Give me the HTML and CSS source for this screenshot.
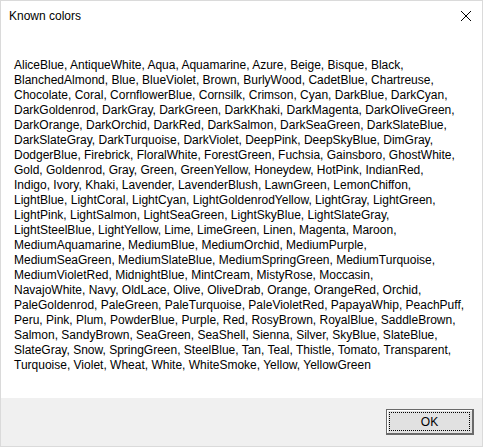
FILE: index.html
```html
<!DOCTYPE html>
<html>
<head>
<meta charset="utf-8">
<link rel="stylesheet" href="styles.css">
</head>
<body>
<div class="window">
  <div class="titlebar">
    <span class="title">Known colors</span>
    <svg class="close" width="12" height="12" viewBox="0 0 12 12"><path d="M1 1 L11 11 M11 1 L1 11" stroke="#000" stroke-width="1" fill="none"/></svg>
  </div>
  <div class="content">
    <div class="line">AliceBlue, AntiqueWhite, Aqua, Aquamarine, Azure, Beige, Bisque, Black,</div>
    <div class="line">BlanchedAlmond, Blue, BlueViolet, Brown, BurlyWood, CadetBlue, Chartreuse,</div>
    <div class="line">Chocolate, Coral, CornflowerBlue, Cornsilk, Crimson, Cyan, DarkBlue, DarkCyan,</div>
    <div class="line">DarkGoldenrod, DarkGray, DarkGreen, DarkKhaki, DarkMagenta, DarkOliveGreen,</div>
    <div class="line">DarkOrange, DarkOrchid, DarkRed, DarkSalmon, DarkSeaGreen, DarkSlateBlue,</div>
    <div class="line">DarkSlateGray, DarkTurquoise, DarkViolet, DeepPink, DeepSkyBlue, DimGray,</div>
    <div class="line">DodgerBlue, Firebrick, FloralWhite, ForestGreen, Fuchsia, Gainsboro, GhostWhite,</div>
    <div class="line">Gold, Goldenrod, Gray, Green, GreenYellow, Honeydew, HotPink, IndianRed,</div>
    <div class="line">Indigo, Ivory, Khaki, Lavender, LavenderBlush, LawnGreen, LemonChiffon,</div>
    <div class="line">LightBlue, LightCoral, LightCyan, LightGoldenrodYellow, LightGray, LightGreen,</div>
    <div class="line">LightPink, LightSalmon, LightSeaGreen, LightSkyBlue, LightSlateGray,</div>
    <div class="line">LightSteelBlue, LightYellow, Lime, LimeGreen, Linen, Magenta, Maroon,</div>
    <div class="line">MediumAquamarine, MediumBlue, MediumOrchid, MediumPurple,</div>
    <div class="line">MediumSeaGreen, MediumSlateBlue, MediumSpringGreen, MediumTurquoise,</div>
    <div class="line">MediumVioletRed, MidnightBlue, MintCream, MistyRose, Moccasin,</div>
    <div class="line">NavajoWhite, Navy, OldLace, Olive, OliveDrab, Orange, OrangeRed, Orchid,</div>
    <div class="line">PaleGoldenrod, PaleGreen, PaleTurquoise, PaleVioletRed, PapayaWhip, PeachPuff,</div>
    <div class="line">Peru, Pink, Plum, PowderBlue, Purple, Red, RosyBrown, RoyalBlue, SaddleBrown,</div>
    <div class="line">Salmon, SandyBrown, SeaGreen, SeaShell, Sienna, Silver, SkyBlue, SlateBlue,</div>
    <div class="line">SlateGray, Snow, SpringGreen, SteelBlue, Tan, Teal, Thistle, Tomato, Transparent,</div>
    <div class="line">Turquoise, Violet, Wheat, White, WhiteSmoke, Yellow, YellowGreen</div>
  </div>
  <div class="footer">
    <button class="ok"><span class="focus">OK</span></button>
  </div>
</div>
</body>
</html>
```
FILE: styles.css
```css
html, body {
  margin: 0;
  padding: 0;
  background: #ffffff;
}
.window {
  width: 483px;
  height: 447px;
  box-sizing: border-box;
  border: 1px solid #dadada;
  display: flex;
  flex-direction: column;
  background: #ffffff;
  font-family: "Liberation Sans", Arial, sans-serif;
  color: #000;
}
.titlebar {
  height: 30px;
  flex: none;
  display: flex;
  align-items: center;
  justify-content: space-between;
  padding: 0 10px 0 8px;
}
.title {
  font-size: 12px;
  color: #000;
}
.close {
  display: block;
}
.content {
  flex: 1;
  padding: 27px 0 0 13px;
  font-size: 12px;
  line-height: 15px;
}
.line {
  white-space: nowrap;
}
.footer {
  flex: none;
  height: 48px;
  background: #f0f0f0;
  display: flex;
  justify-content: flex-end;
  align-items: flex-start;
  padding: 11px 8px 0 0;
  box-sizing: border-box;
}
.ok {
  width: 88px;
  height: 26px;
  box-sizing: border-box;
  margin: 0;
  padding: 2px;
  background: #e1e1e1;
  border: 1px solid #6a6a6a;
  border-right-width: 2px;
  border-bottom-width: 2px;
  box-shadow: inset 1px 1px 0 #ffffff;
  font-family: "Liberation Sans", Arial, sans-serif;
  font-size: 12px;
  color: #000;
  display: flex;
}
.focus {
  flex: 1;
  border: 1px dotted #000;
  display: flex;
  align-items: center;
  justify-content: center;
}
```
